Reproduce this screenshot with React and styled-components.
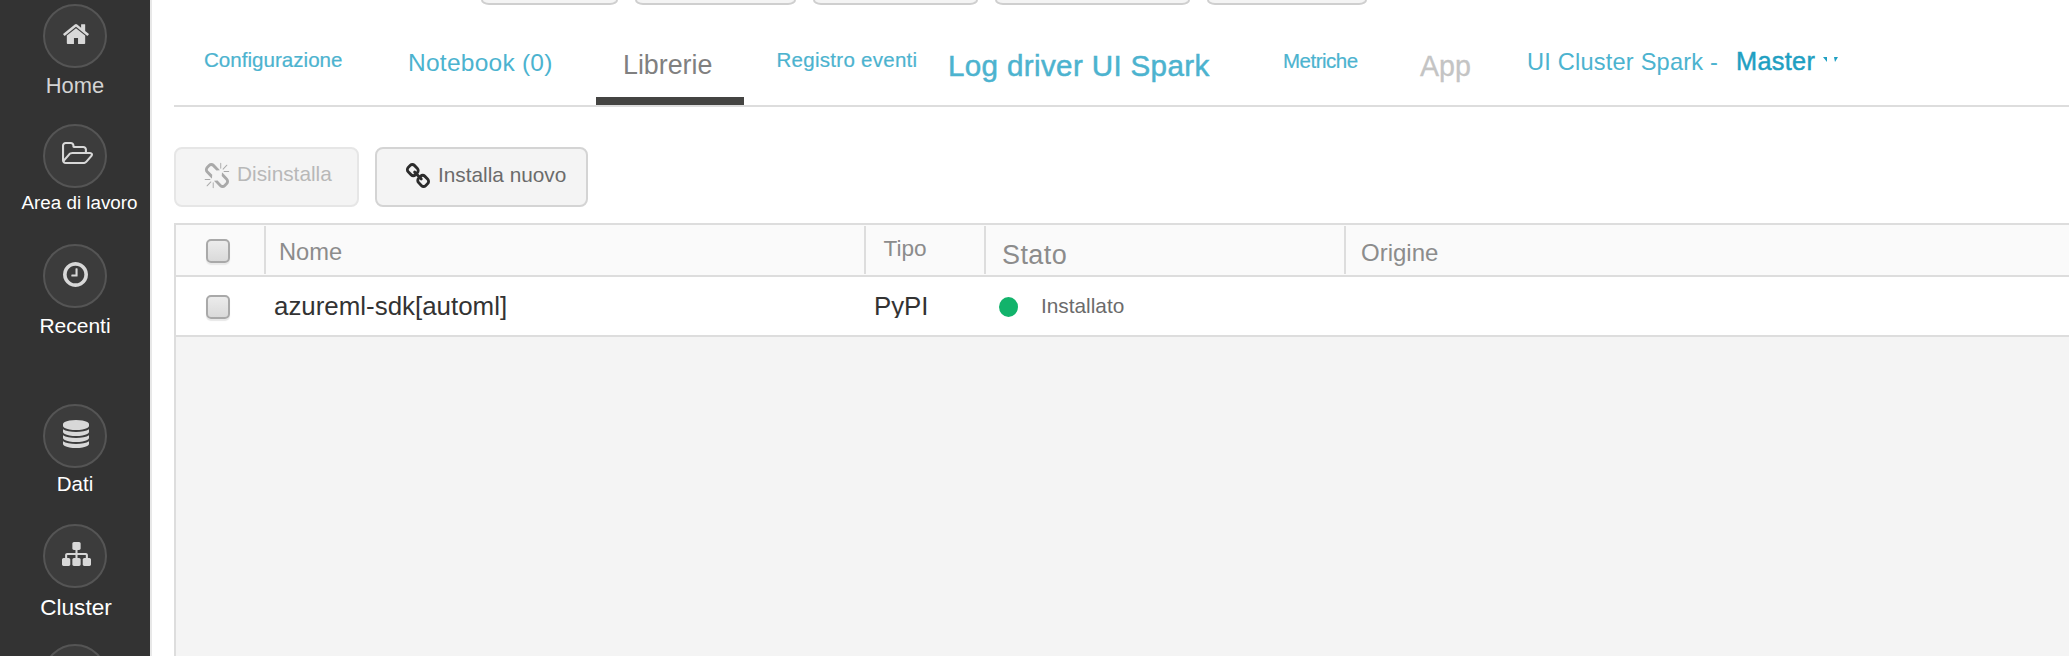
import React from "react";
import styled, { createGlobalStyle } from "styled-components";

const Global = createGlobalStyle`
  * { box-sizing: border-box; }
  body { margin: 0; background: #fff; overflow: hidden; font-family: "Liberation Sans", Arial, sans-serif; }
`;

const ICONS = {
  home: "M1472 992v480q0 26-19 45t-45 19h-384v-384h-256v384h-384q-26 0-45-19t-19-45v-480q0-1 .5-3t.5-3l575-474 575 474q1 2 1 6zm223-69l-62 74q-8 9-21 11h-3q-13 0-21-7l-692-577-692 577q-12 8-24 7-13-2-21-11l-62-74q-8-10-7-23.500t11-21.500l719-599q32-26 76-26t76 26l244 204v-195q0-14 9-23t23-9h192q14 0 23 9t9 23v408l219 182q10 8 11 21.500t-7 23.500z",
  folder: "M1845 931q0-35-53-35h-1088q-40 0-85.500 21.500t-71.500 52.500l-294 363q-18 24-18 40 0 35 53 35h1088q40 0 86-22t71-53l294-363q18-22 18-39zm-1141-163h768v-160q0-40-28-68t-68-28h-576q-40 0-68-28t-28-68v-64q0-40-28-68t-68-28h-320q-40 0-68 28t-28 68v853l256-315q44-53 116-87.500t140-34.500zm1269 163q0 62-46 120l-295 363q-43 53-116 87.500t-140 34.500h-1088q-92 0-158-66t-66-158v-960q0-92 66-158t158-66h320q92 0 158 66t66 158v32h544q92 0 158 66t66 158v160h192q54 0 99 24.500t67 70.500q15 32 15 68z",
  clock: "M1024 544v448q0 14-9 23t-23 9h-320q-14 0-23-9t-9-23v-64q0-14 9-23t23-9h224v-352q0-14 9-23t23-9h64q14 0 23 9t9 23zm416 352q0-148-73-273t-198-198-273-73-273 73-198 198-73 273 73 273 198 198 273 73 273-73 198-198 73-273zm224 0q0 209-103 385.500t-279.500 279.500-385.500 103-385.500-103-279.500-279.500-103-385.500 103-385.500 279.500-279.500 385.500-103 385.500 103 279.500 279.500 103 385.500z",
  database: "M896 768q237 0 443-43t325-127v170q0 69-103 128t-280 93.500-385 34.500-385-34.500-280-93.500-103-128v-170q119 84 325 127t443 43zm0 768q237 0 443-43t325-127v170q0 69-103 128t-280 93.500-385 34.500-385-34.500-280-93.500-103-128v-170q119 84 325 127t443 43zm0-384q237 0 443-43t325-127v170q0 69-103 128t-280 93.500-385 34.500-385-34.500-280-93.500-103-128v-170q119 84 325 127t443 43zm0-1152q208 0 385 34.500t280 93.500 103 128v128q0 69-103 128t-280 93.500-385 34.500-385-34.500-280-93.500-103-128v-128q0-69 103-128t280-93.500 385-34.500z",
  sitemap: "M1792 1248v320q0 40-28 68t-68 28h-320q-40 0-68-28t-28-68v-320q0-40 28-68t68-28h96v-192h-512v192h96q40 0 68 28t28 68v320q0 40-28 68t-68 28h-320q-40 0-68-28t-28-68v-320q0-40 28-68t68-28h96v-192h-512v192h96q40 0 68 28t28 68v320q0 40-28 68t-68 28h-320q-40 0-68-28t-28-68v-320q0-40 28-68t68-28h96v-192q0-52 38-90t90-38h512v-192h-96q-40 0-68-28t-28-68v-320q0-40 28-68t68-28h320q40 0 68 28t28 68v320q0 40-28 68t-68 28h-96v192h512q52 0 90 38t38 90v192h96q40 0 68 28t28 68z",
  link: "M1520 1216q0-40-28-68l-208-208q-28-28-68-28-42 0-72 32 3 3 19 18.500t21.500 21.500 15 19 13 25.500 3.500 27.500q0 40-28 68t-68 28q-15 0-27.500-3.500t-25.500-13-19-15-21.500-21.500-18.500-19q-33 31-33 73 0 40 28 68l206 207q27 27 68 27 40 0 68-26l147-146q28-28 28-67zm-703-705q0-40-28-68l-206-207q-28-28-68-28-39 0-68 27l-147 146q-28 28-28 67 0 40 28 68l208 208q27 27 68 27 42 0 72-31-3-3-19-18.500t-21.500-21.500-15-19-13-25.500-3.500-27.500q0-40 28-68t68-28q15 0 27.500 3.500t25.500 13 19 15 21.500 21.500 18.500 19q33-31 33-73zm895 705q0 120-85 203l-147 146q-83 83-203 83-121 0-204-85l-206-207q-83-83-83-203 0-123 88-209l-88-88q-86 88-208 88-120 0-204-84l-208-208q-84-84-84-204t85-203l147-146q83-83 203-83 121 0 204 85l206 207q83 83 83 203 0 123-88 209l88 88q86-88 208-88 120 0 204 84l208 208q84 84 84 204z",
  unlink: "M503 1271l-256 256q-10 9-23 9-12 0-23-9-9-10-9-23t9-23l256-256q10-9 23-9t23 9q9 10 9 23t-9 23zm169 41v320q0 14-9 23t-23 9-23-9-9-23v-320q0-14 9-23t23-9 23 9 9 23zm-224-224q0 14-9 23t-23 9h-320q-14 0-23-9t-9-23 9-23 23-9h320q14 0 23 9t9 23zm1264 128q0 120-85 203l-147 146q-83 83-203 83-121 0-204-85l-334-335q-21-21-42-56l239-18 273 274q28 28 68 27.500t68-27.500l147-146q28-28 28-67 0-40-28-68l-274-275 18-239q35 21 56 42l336 336q84 86 84 204zm-617-724l-239 18-273-274q-28-28-68-28-39 0-68 27l-147 146q-28 28-28 67 0 40 28 68l274 274-18 240q-35-21-56-42l-336-336q-84-86-84-204 0-120 85-203l147-146q83-83 203-83 121 0 204 85l334 335q21 21 42 56zm633 84q0 14-9 23t-23 9h-320q-14 0-23-9t-9-23 9-23 23-9h320q14 0 23 9t9 23zm-544-544v320q0 14-9 23t-23 9-23-9-9-23v-320q0-14 9-23t23-9 23 9 9 23zm407 151l-256 256q-11 9-23 9t-23-9q-9-10-9-23t9-23l256-256q10-9 23-9t23 9q9 10 9 23t-9 23z",
};

const IconSvg = styled.svg`
  display: block;
  flex: none;
  overflow: visible;
  width: ${(p) => p.$w}px;
  height: ${(p) => p.$h}px;
  fill: currentColor;
`;
const Icon = ({ name, box, w, h }) => (
  <IconSvg viewBox={box} $w={w} $h={h} preserveAspectRatio="none" aria-hidden="true">
    <path d={ICONS[name]} />
  </IconSvg>
);

const Page = styled.div`
  display: flex;
  width: 2069px;
  height: 656px;
  overflow: hidden;
`;

/* $base is the baseline's distance from the top of the text's container */
const Text = styled.span`
  display: block;
  flex: none;
  align-self: flex-start;
  white-space: nowrap;
  line-height: 30px;
  font-size: ${(p) => p.$size}px;
  letter-spacing: ${(p) => p.$ls || 0}px;
  color: ${(p) => p.$color || "inherit"};
  margin-top: ${(p) => Math.round(p.$base - 15 - 0.3465 * p.$size)}px;
  -webkit-text-stroke: ${(p) => p.$stroke || 0}px currentColor;
`;

const Sidebar = styled.nav`
  flex: none;
  width: 152px;
  padding-top: 4px;
  background: #333;
  border-right: 2px solid #e8e8e8;
`;
const NavItem = styled.a`
  display: flex;
  flex-direction: column;
  align-items: center;
  height: ${(p) => p.$h || 120}px;
  color: #fff;
`;
const Circle = styled.span`
  flex: none;
  display: flex;
  justify-content: center;
  width: 64px;
  height: 64px;
  padding: ${(p) => p.$top}px 0 0 ${(p) => p.$left}px;
  border: 2px solid #555;
  border-radius: 50%;
  background: #3c3c3c;
  color: #d8d8d8;
`;
const NavLabel = styled(Text)`
  align-self: center;
  padding-left: ${(p) => p.$indent || 0}px;
`;

const Main = styled.main`
  flex: 1;
  min-width: 0;
  display: flex;
  flex-direction: column;
  padding-left: 22px;
`;
const ActionStrip = styled.div`
  flex: none;
  display: flex;
  gap: 17px;
  height: 5px;
  padding-left: 307px;
`;
const ActionStub = styled.div`
  width: ${(p) => p.$w}px;
  background: #f4f4f4;
  border: 2px solid #cfcfcf;
  border-top: 0;
  border-radius: 0 0 8px 8px / 0 0 5px 5px;
`;
const Tabs = styled.div`
  flex: none;
  display: flex;
  height: 102px;
  border-bottom: 2px solid #ddd;
  color: #4cb3cf;
`;
const Tab = styled.a`
  flex: none;
  display: flex;
  width: ${(p) => p.$w}px;
  padding-left: ${(p) => p.$pad}px;
  ${(p) => p.$active && "border-bottom: 8px solid #444442; color: #808080;"}
`;
const Emphasis = styled(Text)`
  margin-left: 18px;
`;
const MarkSvg = styled.svg`
  flex: none;
  width: 16px;
  height: 6px;
  margin: 52px 0 0 8px;
  fill: #1fa0c2;
`;

const Toolbar = styled.div`
  flex: none;
  display: flex;
  gap: 16px;
  padding: 40px 0 16px;
`;
const Button = styled.button`
  display: flex;
  width: ${(p) => p.$w}px;
  height: 60px;
  padding: 0 0 0 29px;
  border: 2px solid ${(p) => (p.disabled ? "#e6e6e6" : "#d4d4d4")};
  border-radius: 8px;
  background: #f4f4f4;
  font-family: inherit;
  text-align: left;
  color: ${(p) => (p.disabled ? "#b8b8b8" : "#6b6b6b")};
`;
const ButtonIcon = styled.span`
  margin: 15px 8px 0 0;
  color: ${(p) => p.$color};
`;

const Table = styled.section`
  flex: 1;
  border: 2px solid #ddd;
  border-width: 2px 0 0 2px;
  background: #f4f4f4;
`;
const Row = styled.div`
  display: flex;
  height: ${(p) => (p.$head ? 52 : 60)}px;
  padding: ${(p) => (p.$head ? "1px 0" : 0)};
  border-bottom: 2px solid #ddd;
  background: ${(p) => (p.$head ? "#fafafa" : "#fff")};
  color: ${(p) => (p.$head ? "#8c8c8c" : "#333")};
`;
const Cell = styled.div`
  flex: none;
  display: flex;
  width: ${(p) => p.$w}px;
  padding-left: ${(p) => p.$pad}px;
  border-right: ${(p) => (p.$divider ? "2px solid #ddd" : 0)};
`;
const Checkbox = styled.span`
  width: 24px;
  height: 24px;
  margin-top: ${(p) => p.$top}px;
  border: 2px solid #a9a9a9;
  border-radius: 5px;
  background: linear-gradient(#ececec, #dadada);
  box-shadow: 0 2px 1px #e8e8e8;
`;
const Clip = styled.div`
  display: flex;
  height: 41px;
  overflow: hidden;
`;
const Dot = styled.span`
  width: 19px;
  height: 20px;
  margin: 20px 23px 0 0;
  border-radius: 50%;
  background: #12b36b;
`;

const NAV = [
  { label: "Home", size: 21.9, base: 26, color: "#d4d4d4", icon: "home", box: "80 245 1632 1291", w: 26, h: 20, top: 18, left: 2 },
  { label: "Area di lavoro", size: 18.8, base: 22, indent: 9, icon: "folder", box: "64 128 1909 1408", w: 31, h: 22, top: 16, left: 5 },
  { label: "Recenti", size: 21, base: 25, icon: "clock", box: "128 128 1536 1536", w: 25, h: 25, top: 16, left: 1, height: 160 },
  { label: "Dati", size: 20.5, base: 23, icon: "database", box: "128 0 1536 1792", w: 26, h: 28, top: 14, left: 2 },
  { label: "Cluster", size: 22.6, base: 28, indent: 2, icon: "sitemap", box: "0 128 1792 1536", w: 29, h: 24, top: 16, left: 2 },
];
const ICON_BOX = "84 80 1628 1568";

export default function App() {
  return (
    <Page>
      <Global />
      <Sidebar>
        {NAV.map((n) => (
          <NavItem key={n.label} $h={n.height}>
            <Circle $top={n.top} $left={n.left}>
              <Icon name={n.icon} box={n.box} w={n.w} h={n.h} />
            </Circle>
            <NavLabel $size={n.size} $base={n.base} $color={n.color} $indent={n.indent}>{n.label}</NavLabel>
          </NavItem>
        ))}
        <NavItem><Circle /></NavItem>
      </Sidebar>
      <Main>
        <ActionStrip>
          {[137, 161, 165, 195, 160].map((w, i) => <ActionStub key={i} $w={w} />)}
        </ActionStrip>
        <Tabs>
          <Tab $w={203} $pad={30}><Text $size={20.6} $base={62} $stroke={0.2}>Configurazione</Text></Tab>
          <Tab $w={219} $pad={31}><Text $size={24.5} $base={66} $ls={0.25}>Notebook (0)</Text></Tab>
          <Tab $w={148} $pad={27} $active><Text $size={26.8} $base={69}>Librerie</Text></Tab>
          <Tab $w={186} $pad={32.5}><Text $size={20.5} $base={62} $ls={0.28} $stroke={0.2}>Registro eventi</Text></Tab>
          <Tab $w={324} $pad={18}><Text $size={29.6} $base={71} $ls={0.35} $stroke={0.5}>Log driver UI Spark</Text></Tab>
          <Tab $w={146} $pad={29}><Text $size={20.5} $base={63} $ls={-0.5} $stroke={0.2}>Metriche</Text></Tab>
          <Tab $w={100} $pad={20}><Text $size={28.6} $base={71} $color="#c4c4c4" $stroke={0.3}>App</Text></Tab>
          <Tab $w={400} $pad={27}>
            <Text $size={23.6} $base={65} $ls={0.2}>UI Cluster Spark -</Text>
            <Emphasis $size={25.3} $base={65} $ls={0.3} $color="#1fa0c2" $stroke={0.5}>Master</Emphasis>
            <MarkSvg viewBox="0 0 16 6" aria-hidden="true">
              <path d="M0 0h4v5zM11 0h4l-3 5z" />
            </MarkSvg>
          </Tab>
        </Tabs>
        <Toolbar>
          <Button $w={185} disabled>
            <ButtonIcon $color="#a9a9a9"><Icon name="unlink" box={ICON_BOX} w={24} h={24} /></ButtonIcon>
            <Text $size={20.8} $base={32}>Disinstalla</Text>
          </Button>
          <Button $w={213}>
            <ButtonIcon $color="#2c2c2c"><Icon name="link" box={ICON_BOX} w={24} h={24} /></ButtonIcon>
            <Text $size={20.8} $base={33}>Installa nuovo</Text>
          </Button>
        </Toolbar>
        <Table>
          <Row $head>
            <Cell $w={90} $pad={30} $divider><Checkbox $top={13} /></Cell>
            <Cell $w={600} $pad={13} $divider><Text $size={23.7} $base={34}>Nome</Text></Cell>
            <Cell $w={120} $pad={17.5} $divider><Text $size={22.6} $base={31}>Tipo</Text></Cell>
            <Cell $w={360} $pad={16} $divider><Text $size={27} $base={38} $ls={0.4}>Stato</Text></Cell>
            <Cell $w={723} $pad={15}><Text $size={24} $base={35}>Origine</Text></Cell>
          </Row>
          <Row>
            <Cell $w={90} $pad={30}><Checkbox $top={18} /></Cell>
            <Cell $w={600} $pad={8}><Text $size={25.9} $base={38}>azureml-sdk[automl]</Text></Cell>
            <Cell $w={120} $pad={8}><Clip><Text $size={25.8} $base={38}>PyPI</Text></Clip></Cell>
            <Cell $w={360} $pad={13}>
              <Dot />
              <Text $size={20.8} $base={36} $color="#6b6b6b">Installato</Text>
            </Cell>
          </Row>
        </Table>
      </Main>
    </Page>
  );
}
